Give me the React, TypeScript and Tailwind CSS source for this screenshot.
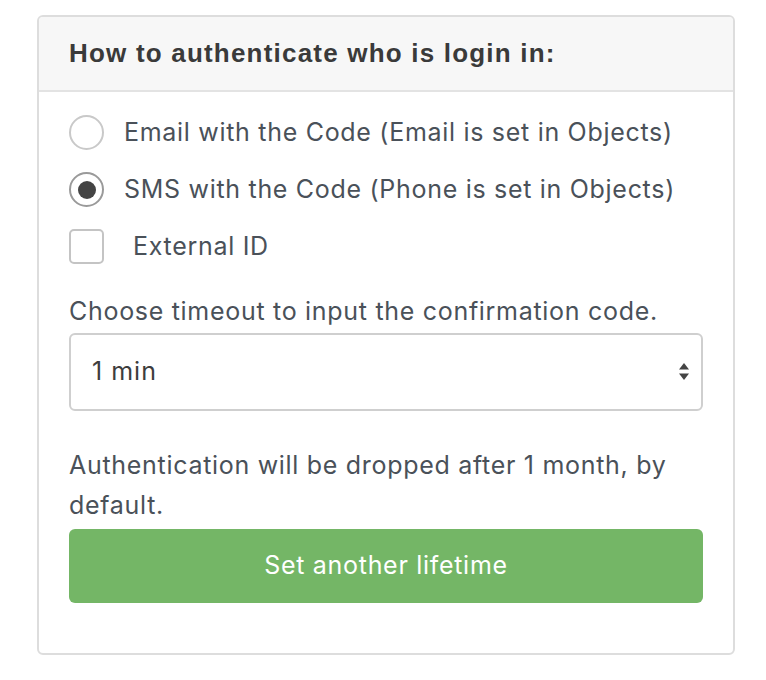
import React, { useState } from 'react';

export default function App() {
    const [method, setMethod] = useState<'email' | 'sms'>('sms');
    const [external, setExternal] = useState(false);
    const [timeout, setTimeoutValue] = useState('1 min');

    return (
        <div className="min-h-screen bg-white pt-[15px] pl-[37px] font-['Inter','Liberation_Sans',Arial,sans-serif]">
            <div className="w-[698px] border-2 border-[#dddddd] rounded-[6px] overflow-hidden">
                {/* Header */}
                <div className="h-[75px] bg-[#f7f7f7] border-b-2 border-[#e3e3e3] px-[30px] flex items-center">
                    <h2 className="text-[26px] font-bold text-[#3a3a3a] tracking-[1.2px] font-['Liberation_Sans',Arial,sans-serif]">How to authenticate who is login in:</h2>
                </div>

                <div className="px-[30px] pt-[12px] pb-[50px] text-[#4a5159] text-[25px] tracking-[0.7px]">
                    {/* Radios */}
                    <label className="h-[57px] flex items-center cursor-pointer" onClick={() => setMethod('email')}>
                        <span className={`w-[35px] h-[35px] rounded-full border-2 flex items-center justify-center shrink-0 ${method === 'email' ? 'border-[#9a9a9a]' : 'border-[#c9c9c9]'}`}>
                            {method === 'email' && <span className="w-[18px] h-[18px] rounded-full bg-[#444]" />}
                        </span>
                        <span className="ml-[20px]">Email with the Code (Email is set in Objects)</span>
                    </label>
                    <label className="h-[57px] flex items-center cursor-pointer" onClick={() => setMethod('sms')}>
                        <span className={`w-[35px] h-[35px] rounded-full border-2 flex items-center justify-center shrink-0 ${method === 'sms' ? 'border-[#9a9a9a]' : 'border-[#c9c9c9]'}`}>
                            {method === 'sms' && <span className="w-[18px] h-[18px] rounded-full bg-[#444]" />}
                        </span>
                        <span className="ml-[20px]">SMS with the Code (Phone is set in Objects)</span>
                    </label>
                    <label className="h-[57px] flex items-center cursor-pointer" onClick={() => setExternal(!external)}>
                        <span className="w-[35px] h-[35px] rounded-[5px] border-2 border-[#c4c4c4] flex items-center justify-center shrink-0">
                            {external && <span className="text-[#444] text-[22px] leading-none">✓</span>}
                        </span>
                        <span className="ml-[29px]">External ID</span>
                    </label>

                    {/* Timeout */}
                    <p className="mt-[16px] leading-[40px]">Choose timeout to input the confirmation code.</p>
                    <div className="relative mt-[2px]">
                        <select
                            value={timeout}
                            onChange={(e) => setTimeoutValue(e.target.value)}
                            className="appearance-none w-full h-[78px] border-2 border-[#cfcfcf] rounded-[6px] pl-[21px] pr-[40px] text-[25px] tracking-[1px] text-[#3d3d3d] bg-white outline-none"
                        >
                            <option>1 min</option>
                            <option>2 min</option>
                            <option>5 min</option>
                            <option>10 min</option>
                        </select>
                        <svg className="absolute right-[13px] top-[29px] pointer-events-none" width="12" height="19" viewBox="0 0 12 19">
                            <path d="M6 1 L11 7.5 H1 Z" fill="#444" />
                            <path d="M6 18 L11 11.5 H1 Z" fill="#444" />
                        </svg>
                    </div>

                    {/* Lifetime */}
                    <p className="mt-[34px] leading-[40px]">Authentication will be dropped after 1 month, by default.</p>
                    <button className="mt-[4px] w-full h-[74px] bg-[#74b666] hover:bg-[#68a95a] rounded-[6px] text-white text-[25px] tracking-[0.7px]">
                        Set another lifetime
                    </button>
                </div>
            </div>
        </div>
    );
}
